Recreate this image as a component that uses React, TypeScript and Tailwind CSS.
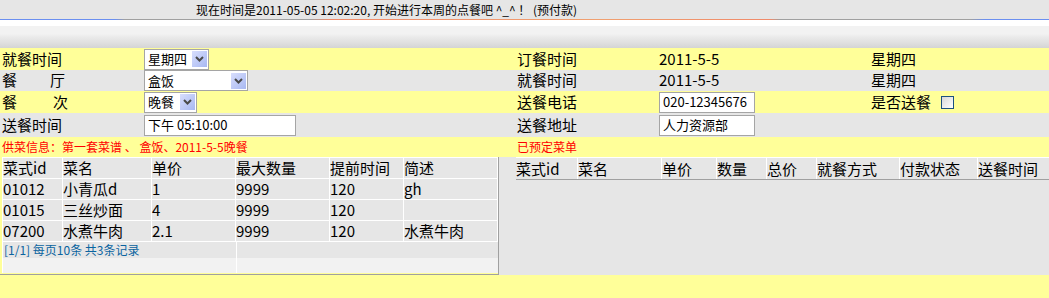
import React from 'react';

const Arrow: React.FC = () => (
  <span className="ml-auto mr-px flex h-[16px] w-[15px] items-center justify-center bg-gradient-to-br from-[#d8defc] to-[#a8b8f2]">
    <svg width="9" height="6" viewBox="0 0 9 6">
      <path d="M1 1l3.5 3.5L8 1" stroke="#4a4a4a" strokeWidth="2" fill="none" />
    </svg>
  </span>
);

const Select: React.FC<{ w: string; text: string }> = ({ w, text }) => (
  <div className={`flex h-[21px] items-center border border-[#a5a5a5] bg-white text-[13px] ${w}`}>
    <span className="pl-[3px]">{text}</span>
    <Arrow />
  </div>
);

const Input: React.FC<{ w: string; text: string }> = ({ w, text }) => (
  <div className={`flex h-[21px] items-center border border-[#a5a5a5] bg-white pl-[3px] text-[13px] ${w}`}>
    {text}
  </div>
);

const leftCols = ['菜式id', '菜名', '单价', '最大数量', '提前时间', '简述'];
const dishes = [
  ['01012', '小青瓜d', '1', '9999', '120', 'gh'],
  ['01015', '三丝炒面', '4', '9999', '120', ''],
  ['07200', '水煮牛肉', '2.1', '9999', '120', '水煮牛肉'],
];
const rightCols = ['菜式id', '菜名', '单价', '数量', '总价', '就餐方式', '付款状态', '送餐时间'];

const App: React.FC = () => {
  return (
    <div className="h-[298px] w-[1049px] overflow-hidden bg-[#ffff99] font-['Noto_Sans_CJK_SC',sans-serif] text-black">
      {/* Top notice */}
      <div className="h-[19px] bg-[#e6e6e6] pl-[196px] text-[12px] leading-[19px] whitespace-pre">
        现在时间是2011-05-05 12:02:20, 开始进行本周的点餐吧 ^_^ ！ (预付款)
      </div>
      <div className="h-px bg-[linear-gradient(to_right,#6b8ff0_0,#6b8ff0_115px,#a0a0a0_125px,#a0a0a0_310px,#f08a6a_330px,#f0a070_600px,#f08a6a_770px,#a0a0a0_780px,#a0a0a0_970px,#6b8ff0_985px)]" />
      <div className="h-[6px] bg-white" />
      <div className="h-[22px] bg-[linear-gradient(to_bottom,#f2f2f2_0,#f2f2f2_35%,#e8e8e8_55%,#dedede_80%,#d4d4d4_100%)]" />

      {/* Form rows */}
      <div className="flex h-[22px] items-center bg-[#ffff99] text-[15px]">
        <div className="w-[144px] pl-[2px]">就餐时间</div>
        <div className="w-[356px]">
          <Select w="w-[65px]" text="星期四" />
        </div>
        <div className="w-[159px] pl-[17px]">订餐时间</div>
        <div className="w-[212px]">2011-5-5</div>
        <div>星期四</div>
      </div>
      <div className="flex h-[21px] items-center bg-[#e6e6e6] text-[15px]">
        <div className="flex w-[144px] pl-[2px]">
          <span>餐</span>
          <span className="ml-[33px]">厅</span>
        </div>
        <div className="w-[356px]">
          <Select w="w-[104px]" text="盒饭" />
        </div>
        <div className="w-[159px] pl-[17px]">就餐时间</div>
        <div className="w-[212px]">2011-5-5</div>
        <div>星期四</div>
      </div>
      <div className="flex h-[22px] items-center bg-[#ffff99] text-[15px]">
        <div className="flex w-[144px] pl-[2px]">
          <span>餐</span>
          <span className="ml-[36px]">次</span>
        </div>
        <div className="w-[356px]">
          <Select w="w-[53px]" text="晚餐" />
        </div>
        <div className="w-[159px] pl-[17px]">送餐电话</div>
        <div className="w-[212px]">
          <Input w="w-[96px]" text="020-12345676" />
        </div>
        <div className="flex items-center">
          是否送餐
          <span className="ml-[10px] h-[13px] w-[13px] border border-[#1c5180] bg-gradient-to-br from-[#d8d8d8] to-white" />
        </div>
      </div>
      <div className="flex h-[24px] items-center bg-[#e6e6e6] text-[15px]">
        <div className="w-[144px] pl-[2px]">送餐时间</div>
        <div className="w-[356px]">
          <Input w="w-[152px]" text="下午 05:10:00" />
        </div>
        <div className="w-[159px] pl-[17px]">送餐地址</div>
        <div className="w-[212px]">
          <Input w="w-[96px]" text="人力资源部" />
        </div>
      </div>
      <div className="flex h-[20px] items-center bg-[#ffff99] text-[12px] text-[#ff0000]">
        <div className="w-[517px] pl-[2px]">供菜信息：第一套菜谱 、 盒饭、2011-5-5晚餐</div>
        <div>已预定菜单</div>
      </div>

      {/* Tables */}
      <div className="flex h-[118px]">
        <div className="w-[499px] border-b border-r border-[#a0a0a0] pl-[2px]">
          <div className="grid grid-cols-[59px_88px_83px_93px_73px_93px] gap-px bg-white p-px pb-0 text-[15px]">
            {leftCols.map((c) => (
              <div key={c} className="h-[20px] bg-[#e6e6e6] leading-[20px]">
                {c}
              </div>
            ))}
            {dishes.map((row) =>
              row.map((v, i) => (
                <div key={row[0] + i} className="h-[20px] bg-[#e6e6e6] leading-[20px]">
                  {v}
                </div>
              ))
            )}
          </div>
          <div className="grid h-[32px] grid-cols-[233px_1fr] gap-px bg-white pl-px pt-px">
            <div className="bg-[linear-gradient(to_bottom,#e6e6e6_0,#e6e6e6_16px,#f2f2f2_16px)] pl-[1px] text-[12px] leading-[15px] text-[#0a64a0]">
              [1/1] 每页10条 共3条记录
            </div>
            <div className="bg-[linear-gradient(to_bottom,#e6e6e6_0,#e6e6e6_16px,#f2f2f2_16px)]" />
          </div>
        </div>
        <div className="flex-1 bg-[#e6e6e6] pl-[17px]">
          <div className="grid grid-cols-[61px_83px_54px_49px_49px_82px_77px_1fr] gap-x-px border-b border-[#a0a0a0] bg-white pt-px text-[15px]">
            {rightCols.map((c) => (
              <div key={c} className="h-[21px] bg-[#e6e6e6] leading-[21px]">
                {c}
              </div>
            ))}
          </div>
        </div>
      </div>
    </div>
  );
};

export default App;
